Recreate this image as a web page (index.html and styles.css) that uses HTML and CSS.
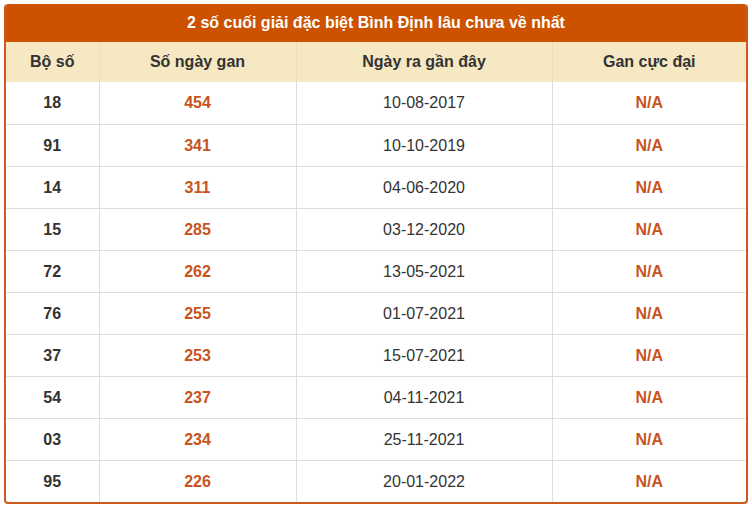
FILE: index.html
```html
<!DOCTYPE html>
<html lang="vi">
<head>
<meta charset="utf-8">
<link rel="stylesheet" href="styles.css">
</head>
<body>
<div class="box">
  <div class="title">2 số cuối giải đặc biệt Bình Định lâu chưa về nhất</div>
  <table class="tbl">
    <colgroup>
      <col class="c1"><col class="c2"><col class="c3"><col class="c4">
    </colgroup>
    <thead>
      <tr><th>Bộ số</th><th>Số ngày gan</th><th>Ngày ra gần đây</th><th>Gan cực đại</th></tr>
    </thead>
    <tbody>
      <tr><td class="num">18</td><td class="hl">454</td><td class="date">10-08-2017</td><td class="hl">N/A</td></tr>
      <tr><td class="num">91</td><td class="hl">341</td><td class="date">10-10-2019</td><td class="hl">N/A</td></tr>
      <tr><td class="num">14</td><td class="hl">311</td><td class="date">04-06-2020</td><td class="hl">N/A</td></tr>
      <tr><td class="num">15</td><td class="hl">285</td><td class="date">03-12-2020</td><td class="hl">N/A</td></tr>
      <tr><td class="num">72</td><td class="hl">262</td><td class="date">13-05-2021</td><td class="hl">N/A</td></tr>
      <tr><td class="num">76</td><td class="hl">255</td><td class="date">01-07-2021</td><td class="hl">N/A</td></tr>
      <tr><td class="num">37</td><td class="hl">253</td><td class="date">15-07-2021</td><td class="hl">N/A</td></tr>
      <tr><td class="num">54</td><td class="hl">237</td><td class="date">04-11-2021</td><td class="hl">N/A</td></tr>
      <tr><td class="num">03</td><td class="hl">234</td><td class="date">25-11-2021</td><td class="hl">N/A</td></tr>
      <tr><td class="num">95</td><td class="hl">226</td><td class="date">20-01-2022</td><td class="hl">N/A</td></tr>
    </tbody>
  </table>
</div>
</body>
</html>
```

FILE: styles.css
```css
html, body {
  margin: 0;
  padding: 0;
  background: #ffffff;
}
body {
  padding: 4px 4px 0 4px;
  font-family: "Liberation Sans", Arial, sans-serif;
  color: #333333;
}
.box {
  width: 740px;
  border: 2px solid #cc5a1e;
  border-top: 0;
  border-radius: 4px;
  overflow: hidden;
}
.title {
  height: 38px;
  line-height: 38px;
  background: #cc5200;
  color: #ffffff;
  font-weight: bold;
  font-size: 16px;
  text-align: center;
}
.tbl {
  width: 740px;
  border-collapse: collapse;
  table-layout: fixed;
}
.c1 { width: 93px; }
.c2 { width: 197px; }
.c3 { width: 256px; }
.c4 { width: 194px; }
.tbl th {
  height: 40px;
  padding: 0;
  background: #f6e8c3;
  font-size: 16px;
  font-weight: bold;
  color: #333333;
  border-left: 1px solid #ecdcc0;
  text-align: center;
}
.tbl td {
  height: 41px;
  padding: 0;
  text-align: center;
  border-left: 1px solid #dddddd;
  border-top: 1px solid #dddddd;
  font-size: 16px;
}
.tbl th:first-child, .tbl td:first-child { border-left: 0; }
.tbl tbody tr:first-child td { border-top: 0; }
.tbl tbody tr:first-child td { height: 42px; }
.num { font-weight: bold; color: #333333; }
.date { color: #333333; }
.hl { font-weight: bold; color: #c8541c; font-size: 18px; }
```
